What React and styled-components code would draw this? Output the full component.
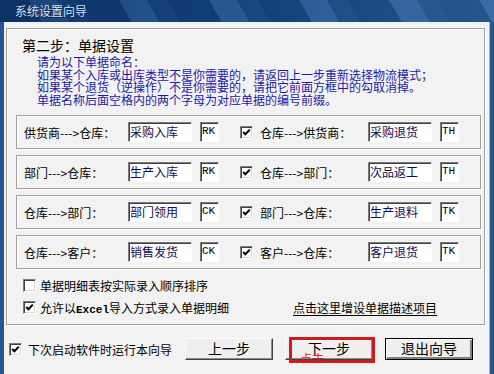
import React from 'react';
import styled, { createGlobalStyle } from 'styled-components';

const GlobalStyle = createGlobalStyle`
  html, body {
    margin: 0;
    padding: 0;
    background: #f2f2f2;
  }
  body {
    font-family: 'Noto Sans CJK SC', 'Noto Sans', sans-serif;
    font-size: 12px;
    color: #000;
  }
`;

const Window = styled.div`
  width: 494px;
  height: 374px;
  display: flex;
  flex-direction: column;
  overflow: hidden;
  background: #f2f2f2;
`;

const TitleBar = styled.div`
  height: 22px;
  flex-shrink: 0;
  display: flex;
  align-items: center;
  padding-left: 15px;
  background:
    linear-gradient(90deg, rgba(5, 30, 70, 0.45) 0%, rgba(5, 30, 70, 0.1) 50%, rgba(120, 160, 210, 0.2) 100%),
    repeating-linear-gradient(60deg, #13427c 0 36px, #2d5f9c 36px 60px, #1a4b86 60px 78px);
  color: #d6e2f6;
  font-size: 12px;
  line-height: 14px;
  text-shadow: 1px 1px 0 #0a2550;
`;

const Body = styled.div`
  flex: 1;
  display: flex;
  flex-direction: column;
  border-left: 4px solid #24568f;
  border-right: 4px solid #24568f;
  box-shadow: inset -1px 0 0 #9db7d8;
`;

const Panel = styled.div`
  box-sizing: border-box;
  height: 297px;
  margin: 6px 5px 0 2px;
  padding: 8px 3px 0 9px;
  border: 1px solid #a0a0a0;
  box-shadow: inset 1px 1px 0 #fff, 1px 1px 0 #fff;
  display: flex;
  flex-direction: column;
`;

const StepTitle = styled.div`
  margin-left: 6px;
  font-size: 14px;
  line-height: 17px;
`;

const Intro = styled.div`
  margin: 2px 0 0 21px;
  color: #1a1aa6;
  font-size: 12px;
  line-height: 12.5px;
`;

const Rows = styled.div`
  margin-top: 9px;
  display: flex;
  flex-direction: column;
  gap: 6px;
`;

const Row = styled.div`
  box-sizing: border-box;
  height: 34px;
  display: flex;
  align-items: center;
  padding-left: 7px;
  border: 1px solid #a0a0a0;
  box-shadow: inset 1px 1px 0 #fff, 1px 1px 0 #fff;
`;

const Label = styled.span`
  width: ${(p) => p.$w}px;
  flex-shrink: 0;
  white-space: nowrap;
`;

const Field = styled.input`
  box-sizing: border-box;
  width: ${(p) => p.$w}px;
  height: 20px;
  margin: 0;
  padding: 0 0 2px 1px;
  background: #fff;
  border: 1px solid;
  border-color: #7c7c7c #fff #fff #7c7c7c;
  box-shadow: inset 1px 1px 0 #404040;
  color: ${(p) => (p.$code ? '#000' : '#0c0c5a')};
  font-family: ${(p) => (p.$code ? "'Liberation Mono', monospace" : "'Noto Sans CJK SC', sans-serif")};
  font-size: ${(p) => (p.$code ? '11px' : '12px')};
  outline: none;
`;

const Gap = styled.span`
  width: ${(p) => p.$w}px;
  flex-shrink: 0;
`;

const Box = styled.span`
  box-sizing: border-box;
  width: 13px;
  height: 13px;
  flex-shrink: 0;
  display: inline-flex;
  align-items: center;
  justify-content: center;
  background: #fff;
  border: 1px solid;
  border-color: #7c7c7c #fff #fff #7c7c7c;
  box-shadow: inset 1px 1px 0 #404040, inset -1px -1px 0 #d8d8d8;
`;

const Options = styled.div`
  margin-top: 7px;
  display: flex;
  flex-direction: column;
  gap: 4px;
  padding-left: 7px;
`;

const OptionRow = styled.div`
  height: 18px;
  display: flex;
  align-items: center;
`;

const CheckLabel = styled.label`
  display: flex;
  align-items: center;
  gap: ${(p) => p.$gap || 4}px;
  white-space: nowrap;
`;

const Latin = styled.span`
  font-family: 'Liberation Mono', monospace;
  font-size: 11px;
  font-weight: bold;
`;

const Link = styled.span`
  margin-left: auto;
  margin-right: 44px;
  text-decoration: underline;
  text-underline-offset: 2px;
  cursor: pointer;
`;

const Footer = styled.div`
  margin-top: 12px;
  height: 24px;
  display: flex;
  align-items: center;
  padding: 0 17px 0 5px;
`;

const Buttons = styled.div`
  margin-left: auto;
  display: flex;
  gap: 12px;
`;

const ButtonWrap = styled.div`
  position: relative;
`;

const Button = styled.button`
  box-sizing: border-box;
  width: 88px;
  height: 22px;
  margin: 0;
  padding: 0 0 2px;
  background: #efefef;
  border: 1px solid;
  border-color: ${(p) => (p.$default ? '#000' : '#fff #404040 #404040 #fff')};
  box-shadow: ${(p) =>
    p.$default
      ? 'inset 1px 1px 0 #fff, inset -2px -2px 0 #808080'
      : 'inset -1px -1px 0 #8c8c8c'};
  font-family: 'Noto Sans CJK SC', sans-serif;
  font-size: 14px;
  line-height: 18px;
  color: #000;
`;

const Marker = styled.div`
  position: absolute;
  left: 4px;
  top: -1px;
  width: 86px;
  height: 26px;
  box-sizing: border-box;
  border: 3px solid #d11b1b;
  overflow: hidden;
  pointer-events: none;
`;

const MarkerNote = styled.span`
  position: absolute;
  left: 8px;
  top: 13px;
  color: #e02222;
  font-size: 12px;
  line-height: 12px;
`;

const Check = ({ checked }) => (
  <Box>
    {checked && (
      <svg width="9" height="9" viewBox="0 0 9 9">
        <polyline points="1.2,4 3.4,6.3 7.8,1.6" fill="none" stroke="#000" strokeWidth="2" />
      </svg>
    )}
  </Box>
);

const rows = [
  ['供货商--->仓库：', '采购入库', 'RK', '仓库--->供货商：', '采购退货', 'TH'],
  ['部门--->仓库：', '生产入库', 'RK', '仓库--->部门：', '次品返工', 'TH'],
  ['仓库--->部门：', '部门领用', 'CK', '部门--->仓库：', '生产退料', 'TK'],
  ['仓库--->客户：', '销售发货', 'CK', '客户--->仓库：', '客户退货', 'TK'],
];

const App = () => (
  <>
    <GlobalStyle />
    <Window>
      <TitleBar>系统设置向导</TitleBar>
      <Body>
        <Panel>
          <StepTitle>第二步：单据设置</StepTitle>
          <Intro>
            请为以下单据命名：
            <br />
            如果某个入库或出库类型不是你需要的，请返回上一步重新选择物流模式；
            <br />
            如果某个退货（逆操作）不是你需要的，请把它前面方框中的勾取消掉。
            <br />
            单据名称后面空格内的两个字母为对应单据的编号前缀。
          </Intro>
          <Rows>
            {rows.map(([inLabel, inName, inCode, outLabel, outName, outCode]) => (
              <Row key={inName}>
                <Label $w={104}>{inLabel}</Label>
                <Field $w={64} readOnly defaultValue={inName} />
                <Gap $w={8} />
                <Field $w={19} $code readOnly defaultValue={inCode} />
                <Gap $w={21} />
                <Check checked />
                <Gap $w={7} />
                <Label $w={108}>{outLabel}</Label>
                <Field $w={64} readOnly defaultValue={outName} />
                <Gap $w={8} />
                <Field $w={19} $code readOnly defaultValue={outCode} />
              </Row>
            ))}
          </Rows>
          <Options>
            <OptionRow>
              <CheckLabel>
                <Check />
                单据明细表按实际录入顺序排序
              </CheckLabel>
            </OptionRow>
            <OptionRow>
              <CheckLabel>
                <Check checked />
                <span>
                  允许以<Latin>Excel</Latin>导入方式录入单据明细
                </span>
              </CheckLabel>
              <Link>点击这里增设单据描述项目</Link>
            </OptionRow>
          </Options>
        </Panel>
        <Footer>
          <CheckLabel $gap={6}>
            <Check checked />
            下次启动软件时运行本向导
          </CheckLabel>
          <Buttons>
            <Button>上一步</Button>
            <ButtonWrap>
              <Button>下一步</Button>
              <Marker>
                <MarkerNote>点击</MarkerNote>
              </Marker>
            </ButtonWrap>
            <Button $default>退出向导</Button>
          </Buttons>
        </Footer>
      </Body>
    </Window>
  </>
);

export default App;
